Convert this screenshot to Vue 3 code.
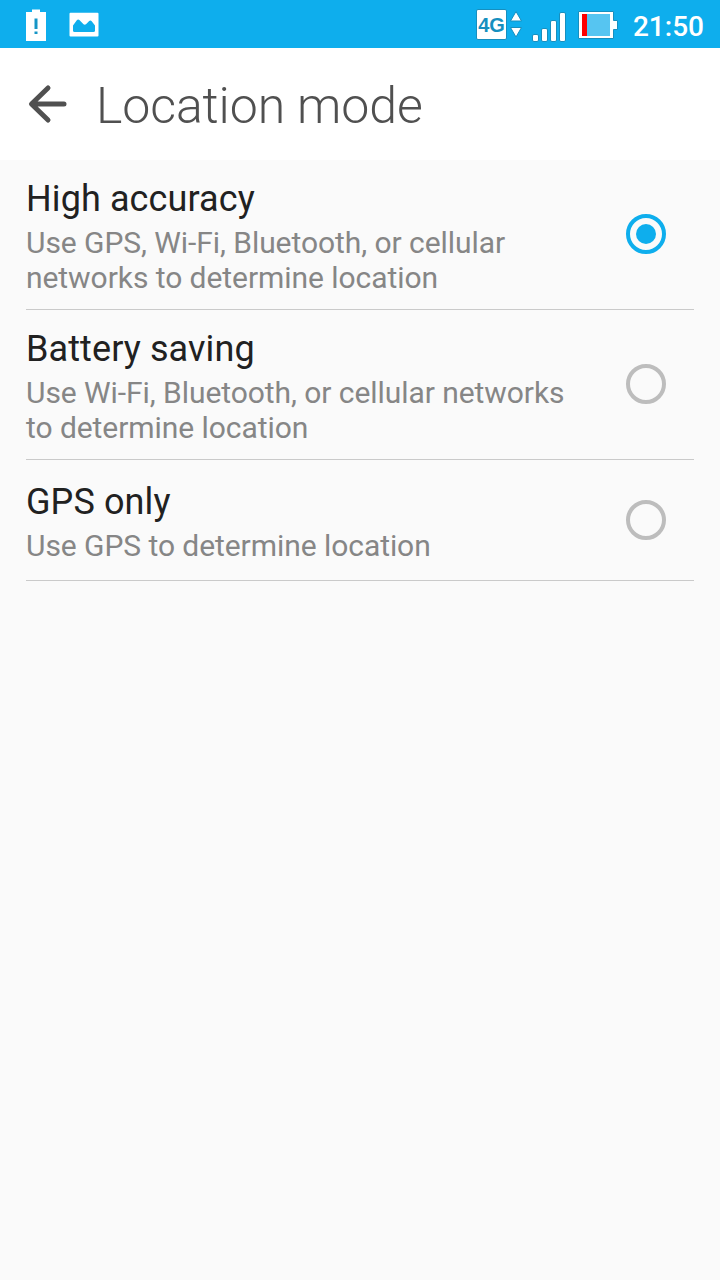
<template>
    <div class="screen">
        <div class="status-bar">
            <svg class="status-icons" width="110" height="48" viewBox="0 0 110 48">
                <!-- battery warning -->
                <path d="M32 9.500h8V12h6v29H26V12h6z" fill="#fff" />
                <path d="M34.500 18.500h3V29h-3zM34.500 31.500h3v2.500h-3z" fill="#1595c6" />
                <!-- picture -->
                <rect x="69.500" y="12.800" width="29" height="23.700" rx="1" fill="#fff" />
                <path d="M73 31v-5.500l4-5.500q1.200-1.200 2.400 0l4.100 4.300q1.200.800 2.500 0l3.200-3.300q1.300-1 2.500.200l3.300 4.300V31q-.3 1-1.500 1H74.500q-1.200 0-1.500-1z" fill="#0eaeed" />
            </svg>
            <div class="status-right">
                <div class="network">4G</div>
                <svg width="112" height="48" viewBox="510 0 112 48">
                    <g fill="#fff" stroke="#168fbf" stroke-width="1">
                        <path d="M516 11.500l5.500 9.500h-11zM516 37l5.500-9.500h-11z" stroke-linejoin="round" />
                        <rect x="532.500" y="34.500" width="6" height="7" rx="1.500" />
                        <rect x="541.500" y="28.500" width="6" height="13" rx="1.500" />
                        <rect x="550.500" y="20.500" width="6" height="21" rx="1.500" />
                        <rect x="559.500" y="12.500" width="6" height="29" rx="1.500" />
                        <path d="M578.500 11.500h35v9h4v9h-4v9h-35z" />
                    </g>
                    <rect x="582" y="14" width="28" height="22" fill="#56c5f1" />
                    <rect x="582" y="14" width="5" height="22" fill="#f00" />
                </svg>
                <span class="clock">21:50</span>
            </div>
        </div>
        <header>
            <svg class="back" width="40" height="40" viewBox="0 0 40 40">
                <path d="M37 20H5M21 4L4.500 20 21 36" />
            </svg>
            <h1>Location mode</h1>
        </header>
        <main>
            <div v-for="mode in modes" :key="mode.id" class="mode" :class="mode.id" @click="selected = mode.id">
                <div class="mode-text">
                    <h2>{{ mode.title }}</h2>
                    <p>{{ mode.summary }}</p>
                </div>
                <div class="radio" :class="{ checked: selected === mode.id }"></div>
            </div>
        </main>
    </div>
</template>

<script setup>
import { ref } from 'vue';

const selected = ref('high');

const modes = [
    { id: 'high', title: 'High accuracy', summary: 'Use GPS, Wi-Fi, Bluetooth, or cellular networks to determine location' },
    { id: 'battery', title: 'Battery saving', summary: 'Use Wi-Fi, Bluetooth, or cellular networks to determine location' },
    { id: 'gps', title: 'GPS only', summary: 'Use GPS to determine location' },
];
</script>

<style>
body {
    margin: 0;
    background: #fafafa;
}
</style>

<style scoped>
.screen {
    min-height: 100vh;
    background: #fafafa;
    font-family: Roboto, sans-serif;
}

.status-bar {
    display: flex;
    justify-content: space-between;
    height: 48px;
    background: #0eaeed;
}

.status-right {
    display: flex;
    align-items: center;
    padding-right: 16px;
}

.network {
    box-sizing: border-box;
    width: 31px;
    height: 31px;
    margin-right: 3px;
    border: 1px solid #168fbf;
    border-radius: 2px;
    background: #fff;
    color: #168fbf;
    font: bold 20px/30px "Liberation Sans", sans-serif;
    text-align: center;
}

.clock {
    width: 72px;
    margin-left: 10px;
    padding-top: 6px;
    color: #fff;
    font-size: 28px;
    font-weight: 500;
    line-height: 32px;
    text-align: right;
}

header {
    display: flex;
    align-items: center;
    box-sizing: border-box;
    height: 112px;
    padding-left: 27px;
    background: #fff;
}

.back {
    fill: none;
    stroke: #505050;
    stroke-width: 5;
    stroke-linecap: round;
    stroke-linejoin: round;
}

h1 {
    margin: 4px 0 0 29px;
    color: #505050;
    font-size: 50px;
    font-weight: 300;
    line-height: 60px;
    letter-spacing: -0.1px;
}

.mode {
    display: flex;
    align-items: center;
    box-sizing: border-box;
    height: 150px;
    margin: 0 26px;
    border-bottom: 1px solid #cacaca;
}

.mode.gps {
    height: 121px;
}

.mode-text {
    width: 560px;
    padding-top: 3px;
}

h2 {
    margin: 0 0 5px;
    color: #212121;
    font-size: 36px;
    font-weight: 400;
    line-height: 42px;
    letter-spacing: 0.1px;
}

p {
    margin: 0;
    color: #868686;
    font-size: 30px;
    line-height: 35px;
    letter-spacing: -0.06px;
}

.radio {
    display: flex;
    align-items: center;
    justify-content: center;
    box-sizing: border-box;
    width: 40px;
    height: 40px;
    margin: 0 0 1px 40px;
    border: 4px solid #bdbdbd;
    border-radius: 50%;
}

.gps .radio {
    margin-bottom: 0;
}

.radio.checked {
    border-color: #0eaeed;
}

.radio.checked::after {
    content: "";
    width: 20px;
    height: 20px;
    border-radius: 50%;
    background: #0eaeed;
}
</style>
